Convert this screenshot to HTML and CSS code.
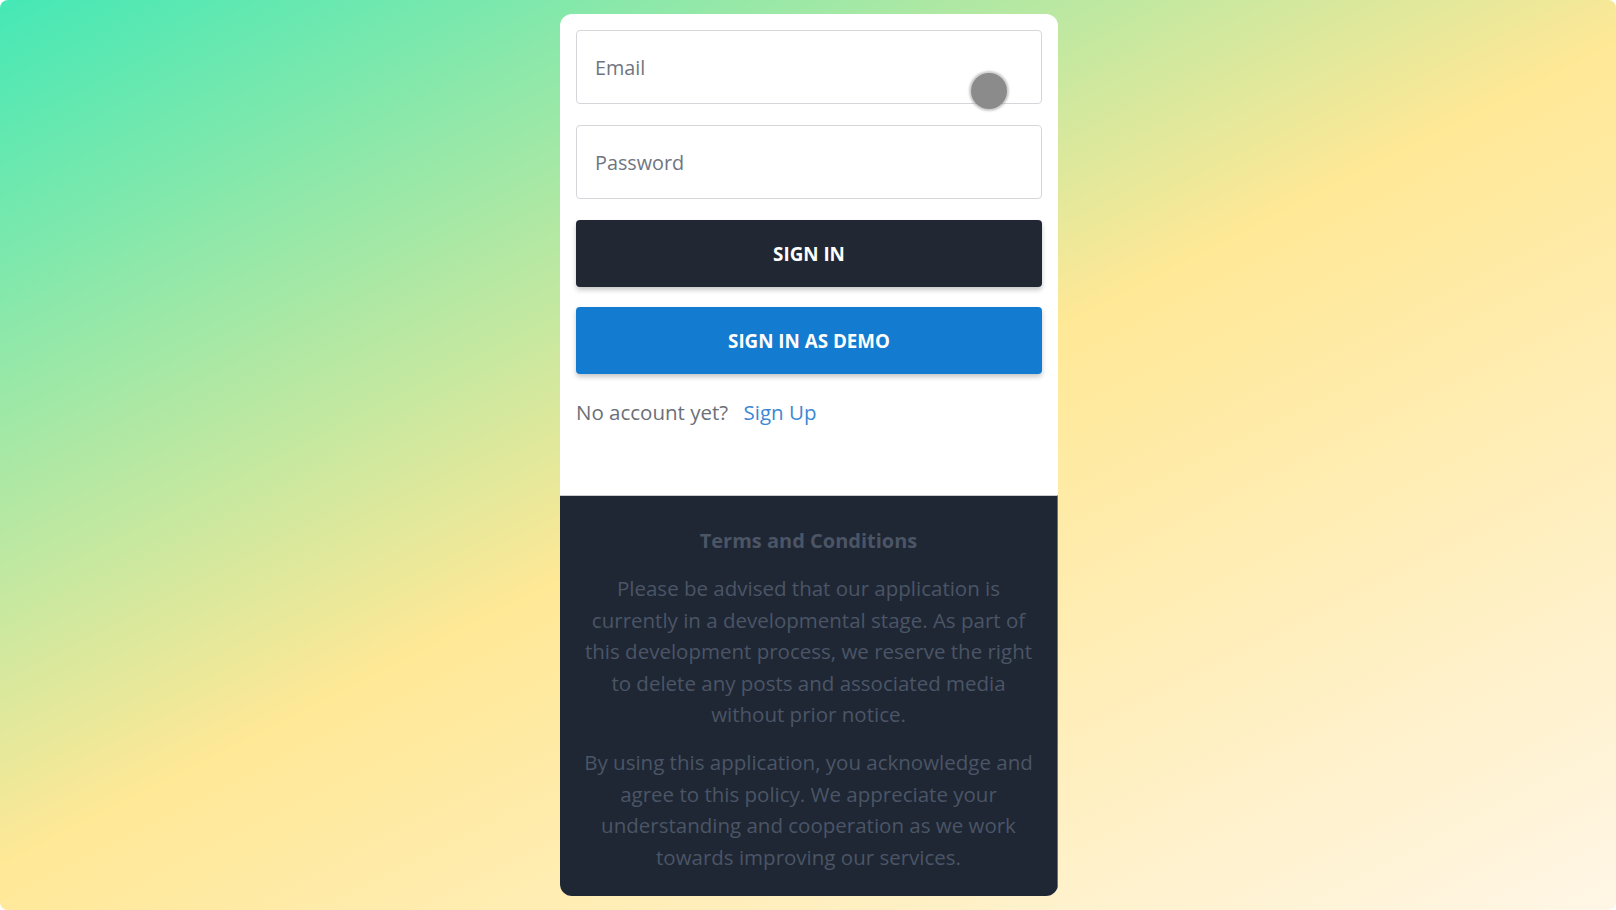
FILE: index.html
```html
<!DOCTYPE html>
<html lang="en">
<head>
<meta charset="utf-8">
<title>Sign In</title>
<link rel="stylesheet" href="styles.css">
</head>
<body>
<main class="page">
  <section class="card">
    <form class="form">
      <div class="field">
        <input class="input" type="email" placeholder="Email">
        <span class="touch"></span>
      </div>
      <input class="input" type="password" placeholder="Password">
      <button type="button" class="btn btn-dark">Sign In</button>
      <button type="button" class="btn btn-blue">Sign In as Demo</button>
      <p class="signup">No account yet? <a href="#" class="signup-link">Sign Up</a></p>
    </form>
    <footer class="terms">
      <h2 class="terms-title">Terms and Conditions</h2>
      <p class="terms-text">Please be advised that our application is currently in a developmental stage. As part of this development process, we reserve the right to delete any posts and associated media without prior notice.</p>
      <p class="terms-text">By using this application, you acknowledge and agree to this policy. We appreciate your understanding and cooperation as we work towards improving our services.</p>
    </footer>
  </section>
</main>
</body>
</html>
```
FILE: styles.css
```css
html {
  background: #ffffff;
}
body {
  margin: 0;
  font-family: "Open Sans", "Noto Sans", "DejaVu Sans", sans-serif;
}
.page {
  min-height: 910px;
  box-sizing: border-box;
  border-radius: 8px;
  padding: 14px 0 0 2px;
  display: flex;
  justify-content: center;
  align-items: flex-start;
  background: linear-gradient(153deg, #45e8b6 0%, #ffe896 50%, #fff6e6 100%);
}
.card {
  width: 498px;
  background: #ffffff;
  border-radius: 12px;
  overflow: hidden;
  display: flex;
  flex-direction: column;
}
.form {
  display: flex;
  flex-direction: column;
  padding: 16px 16px 0;
  margin: 0;
}
.field {
  position: relative;
  display: flex;
  flex-direction: column;
}
.input {
  height: 74px;
  box-sizing: border-box;
  border: 1px solid #d4d6da;
  border-radius: 4px;
  padding: 0 18px;
  font-family: inherit;
  font-size: 19.8px;
  color: #374151;
  outline: none;
  margin-bottom: 21px;
}
.input::placeholder {
  color: #6f7580;
}
.touch {
  position: absolute;
  left: 395px;
  top: 43px;
  width: 36px;
  height: 36px;
  border-radius: 50%;
  background: #8b8b8b;
  box-shadow: 0 0 2px 2px rgba(139, 139, 139, 0.45);
}
.btn {
  height: 67px;
  border: none;
  border-radius: 4px;
  font-family: inherit;
  font-size: 18.8px;
  font-weight: 700;
  text-transform: uppercase;
  color: #ffffff;
  box-shadow: 0 3px 5px rgba(0, 0, 0, 0.22);
  cursor: pointer;
}
.btn-dark {
  background: #212834;
  margin-bottom: 20px;
}
.btn-blue {
  background: #137bd0;
}
.signup {
  margin: 23px 0 0;
  height: 98px;
  font-size: 20.5px;
  line-height: 30px;
  color: #6b7078;
}
.signup-link {
  margin-left: 10px;
  color: #3d87d5;
  text-decoration: none;
}
.terms {
  background: #1f2734;
  border-top: 1px solid #c9cbce;
  border-right: 1px solid #6a717d;
  padding: 30px 18px 23px;
  text-align: center;
  color: #4b5566;
}
.terms-title {
  margin: 0 0 17px;
  font-size: 20px;
  line-height: 30px;
  font-weight: 700;
}
.terms-text {
  margin: 0 0 16px;
  font-size: 20.5px;
  line-height: 31.6px;
}
.terms-text:last-child {
  margin-bottom: 0;
}
```
